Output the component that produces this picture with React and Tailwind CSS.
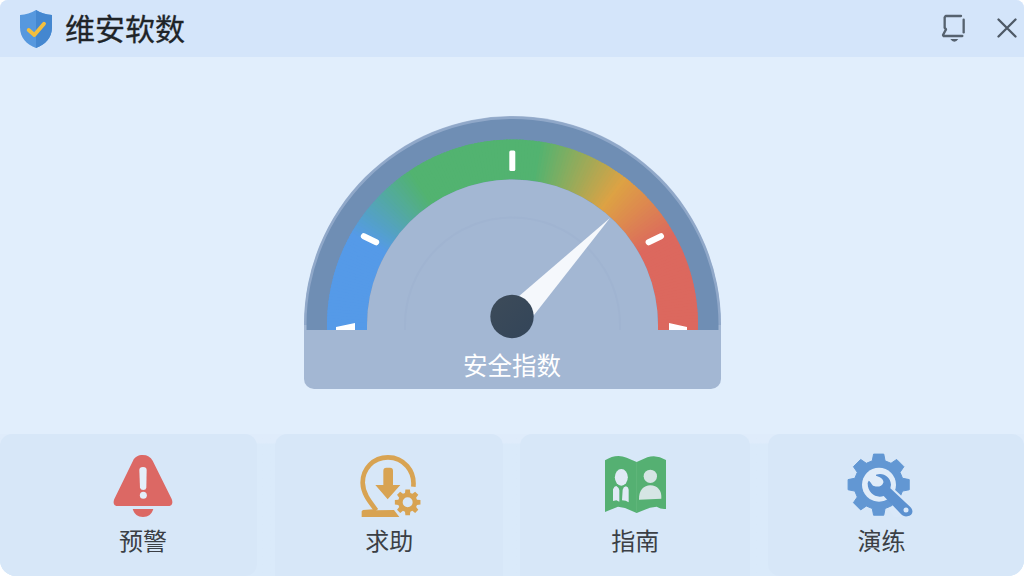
import { clsx } from 'clsx';

const CENTER = { x: 512.5, y: 325 };

// dial colours by angle, 0 = left end, 180 = right end
const STOPS = [
    [-3, [85, 154, 232]],
    [29, [85, 154, 232]],
    [56, [82, 179, 112]],
    [98, [82, 179, 112]],
    [127, [221, 162, 68]],
    [150, [220, 104, 94]],
    [183, [220, 104, 94]],
];

function colorAt(deg) {
    const i = Math.max(1, STOPS.findIndex(([a]) => a >= deg));
    const [a0, c0] = STOPS[i - 1];
    const [a1, c1] = STOPS[i];
    const t = (deg - a0) / (a1 - a0);
    return `rgb(${c0.map((v, k) => Math.round(v + (c1[k] - v) * t)).join(',')})`;
}

function pointAt(deg, r) {
    const rad = (deg * Math.PI) / 180;
    return `${(CENTER.x - r * Math.cos(rad)).toFixed(2)} ${(CENTER.y - r * Math.sin(rad)).toFixed(2)}`;
}

function slicePath(from, to) {
    return `M${pointAt(from, 185.5)} A185.5 185.5 0 0 1 ${pointAt(to, 185.5)} L${pointAt(to, 145.5)} A145.5 145.5 0 0 0 ${pointAt(from, 145.5)}Z`;
}

const SLICES = Array.from({ length: 186 }, (_, i) => i - 3);

function gearPath(cx, cy, outer, body, teeth, wide, narrow) {
    const pts = [];
    for (let i = 0; i < teeth; i++) {
        const mid = (i * 360) / teeth - 90;
        [[-wide, body], [-narrow, outer], [narrow, outer], [wide, body]].forEach(([d, r]) => {
            const a = ((mid + d) * Math.PI) / 180;
            pts.push(`${(cx + r * Math.cos(a)).toFixed(1)} ${(cy + r * Math.sin(a)).toFixed(1)}`);
        });
    }
    return `M${pts.join('L')}Z`;
}

function ShieldLogo() {
    return (
        <svg viewBox="0 0 96 114" className="w-8 h-[38px]">
            <path d="M48 0Q70 14 96 15V52C96 84 76 104 48 114C20 104 0 84 0 52V15Q26 14 48 0Z" fill="#5698de" />
            <path d="M48 0Q70 14 96 15V52C96 84 76 104 48 114Z" fill="#4487d0" />
            <path d="M26 60L43 75L72 41" fill="none" stroke="#f4bf3e" strokeWidth="11.5" strokeLinecap="round" strokeLinejoin="round" />
        </svg>
    );
}

function BellIcon() {
    return (
        <svg viewBox="0 0 78 90" className="w-[26px] h-[30px]" fill="none" stroke="#56626f" strokeWidth="7" strokeLinecap="round" strokeLinejoin="round">
            <path d="M60 6H14L11 10V41L15 46L6 63L8 66H64" />
            <path d="M68 17V55" />
            <path d="M28 75H52Q40 92 28 75Z" fill="#56626f" stroke="none" />
        </svg>
    );
}

function CloseIcon() {
    return (
        <svg viewBox="0 0 20 20" className="w-5 h-5 -translate-y-px" stroke="#4e5966" strokeWidth="2.3" strokeLinecap="round">
            <path d="M1.5 1.5L18.5 18.5M18.5 1.5L1.5 18.5" />
        </svg>
    );
}

function AlertIcon() {
    return (
        <svg viewBox="0 0 216 216" className="w-[72px] h-[72px]">
            <path d="M107 15C94 15 83 21 78 32L22 147C17 160 21 168 32 168H184C195 168 199 160 194 147L137 32C131 21 121 15 107 15Z" fill="#dc6864" />
            <path d="M77 177H139C134 193 124 201 108 201S82 193 77 177Z" fill="#dc6864" />
            <path d="M97 60Q97 51 108 51T119 60L118 113Q117 120 109 120T99 113Z" fill="#e4effa" />
            <circle cx="109" cy="136" r="10.5" fill="#e4effa" />
        </svg>
    );
}

function HelpIcon() {
    return (
        <svg viewBox="0 0 216 216" className="w-[72px] h-[72px]" fill="#d8a352">
            <path d="M181 110C186 63 152 22 105 22C60 22 29 57 29 98C30 132 50 155 70 181" fill="none" stroke="#d8a352" strokeWidth="14" />
            <path d="M30 180L61 178L70 181L123 180L139 201H26V184Z" />
            <path d="M91 105V62Q91 53 100 53H111Q120 53 120 62V105H142L104 148L67 105Z" />
            <path d={`${gearPath(164, 157, 39, 29, 8, 16, 10)}M179 157a15 15 0 1 0-30 0a15 15 0 1 0 30 0Z`} fillRule="evenodd" />
        </svg>
    );
}

function GuideIcon() {
    return (
        <svg viewBox="0 0 216 216" className="w-[72px] h-[72px] translate-x-px">
            <path d="M15 31Q48 10 80 23L110 36L142 22Q170 13 198 30V177Q184 179 170 170L150 173L110 189L75 174L54 170L15 186Z" fill="#55b072" />
            <path d="M110 36V188" stroke="#66b981" strokeWidth="2" />
            <g fill="#e0eaf6">
                <ellipse cx="64" cy="82" rx="19.5" ry="25" />
                <path d="M39 153V118Q43 108 49 108Q58 113 58 121V155L49 151Z" />
                <path d="M66 151L68 119Q70 110 78 109Q86 111 86 119V157L77 152Z" />
            </g>
            <g fill="#d5e5e4">
                <circle cx="151" cy="79" r="20" />
                <path d="M117 149C116 120 132 106 151 106C172 106 186 122 184 146Z" />
            </g>
        </svg>
    );
}

function DrillIcon() {
    const wrench = 'M93 74C113 66 137 79 138 104L136 115L196 171C208 183 202 198 187 199C179 200 173 197 167 191L116 138C92 146 67 128 68 99L71 92C79 95 79 106 87 108C99 112 111 109 115 98C117 86 104 81 93 77Z';
    return (
        <svg viewBox="0 0 216 216" className="w-[72px] h-[72px]">
            <path d={gearPath(101, 104, 93, 74, 8, 15, 9.5)} fill="#6297d3" stroke="#6297d3" strokeWidth="3" strokeLinejoin="round" />
            <circle cx="102" cy="104" r="51" fill="#e0ecf9" />
            <path d="M132 151L179 198L148 202L130 176L144 165Z" fill="#d9e8f9" />
            <path d="M136 115L196 171" stroke="#d9e8f9" strokeWidth="12" />
            <path d={wrench} fill="#5c91d0" />
            <circle cx="183" cy="180" r="7.5" fill="#d9e8f9" />
        </svg>
    );
}

function Gauge() {
    return (
        <section className="w-[417px] h-[273px] rounded-t-[208.5px] rounded-b-[10px] bg-[#a3b7d3] flex flex-col items-center overflow-hidden">
            <svg viewBox="304 116 417 230" className="w-[417px] h-[230px] shrink-0">
                <defs>
                    <clipPath id="dial">
                        <rect x="304" y="116" width="417" height="214" />
                    </clipPath>
                    <linearGradient id="hub" x1="0" y1="0" x2="1" y2="1">
                        <stop offset="0" stopColor="#3d4b59" />
                        <stop offset="1" stopColor="#334559" />
                    </linearGradient>
                </defs>
                <g clipPath="url(#dial)">
                    {/* rim */}
                    <path d="M304 325A208.5 208.5 0 0 1 721 325Z" fill="#90a8c9" />
                    <path d="M306.5 334V325A206 206 0 0 1 718.5 325V334Z" fill="#6f8eb4" />
                    {SLICES.map((deg) => (
                        <path key={deg} d={slicePath(deg, Math.min(deg + 1.6, 183))} fill={colorAt(Math.min(deg, 183))} />
                    ))}
                    <path d="M367 334V325A145.5 145.5 0 0 1 658 325V334Z" fill="#a3b7d3" />
                    <path d="M405 334V325A107.5 107.5 0 0 1 620 325V334" fill="none" stroke="#a0b4d1" strokeWidth="2" />
                    <path d="M336 327L355 323V331H336ZM669 323L687 327V331H669Z" fill="#fff" />
                </g>
                <g stroke="#fff" strokeWidth="6">
                    <rect x="509.3" y="150.5" width="6" height="20.5" rx="1.5" fill="#fff" stroke="none" />
                    <path d="M363.8 236.2L376.2 242.3M661 236.2L648.6 242.3" strokeLinecap="round" />
                </g>
                <path d="M610 218L518 297L534 315Z" fill="#f5f8fc" />
                <circle cx="512" cy="316.5" r="21.7" fill="url(#hub)" />
            </svg>
            <span className="mt-px -ml-px text-[24.5px] leading-9 text-white">安全指数</span>
        </section>
    );
}

const ACTIONS = [
    { label: '预警', icon: AlertIcon, className: 'w-[257px] pl-[29px] rounded-b-xl' },
    { label: '求助', icon: HelpIcon, className: 'w-[228px] pl-px' },
    { label: '指南', icon: GuideIcon, className: 'w-[230px]' },
    { label: '演练', icon: DrillIcon, className: 'w-[256px] pr-[29px] rounded-b-xl' },
];

export default function App() {
    return (
        <div className="w-[1024px] h-[576px] bg-white overflow-hidden font-['Noto_Sans_CJK_SC',sans-serif]">
            <div className="h-full flex flex-col rounded-t-lg rounded-b-2xl overflow-hidden bg-[#e1eefc]">
                <header className="h-[57px] shrink-0 flex items-center justify-between pl-5 pr-[7px] bg-[#d4e5fa]">
                    <div className="flex items-center gap-[13px]">
                        <ShieldLogo />
                        <h1 className="-mt-1 text-[30px] leading-10 text-[#202428] [-webkit-text-stroke:0.3px]">维安软数</h1>
                    </div>
                    <div className="flex items-center gap-[30px]">
                        <button aria-label="通知"><BellIcon /></button>
                        <button aria-label="关闭"><CloseIcon /></button>
                    </div>
                </header>

                <main className="flex-1 flex justify-center pt-[59px] pl-px">
                    <Gauge />
                </main>

                <nav className="h-[142px] shrink-0 flex justify-between bg-linear-to-b from-[#dfecfb] from-[9px] to-[#daeafa] to-[10px]">
                    {ACTIONS.map(({ label, icon: Icon, className }) => (
                        <button key={label} className={clsx('flex flex-col items-center pt-4 rounded-t-xl bg-[#d7e7f8]', className)}>
                            <Icon />
                            <span className="text-[24px] leading-9 text-[#3b3f45]">{label}</span>
                        </button>
                    ))}
                </nav>
            </div>
        </div>
    );
}
